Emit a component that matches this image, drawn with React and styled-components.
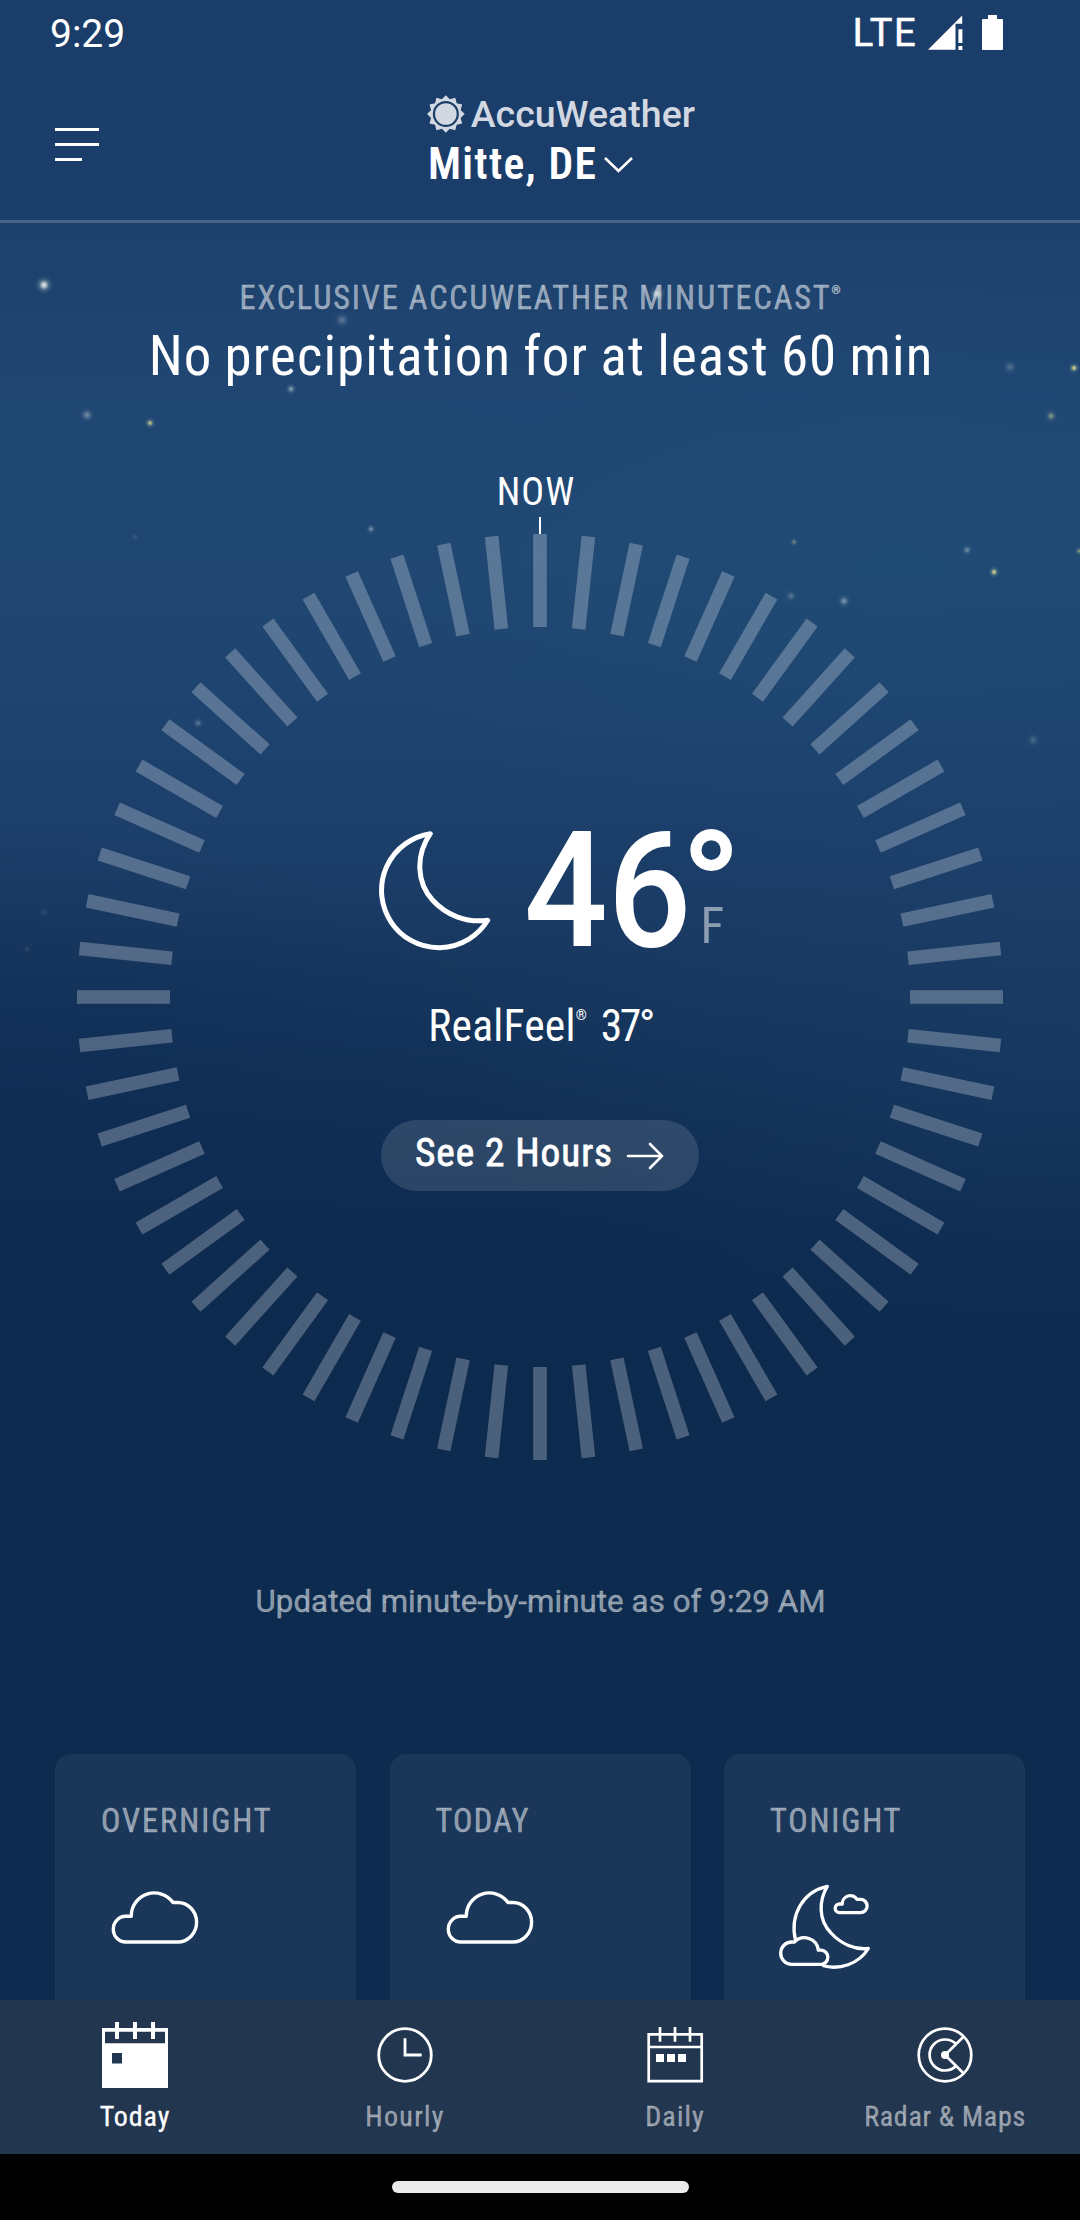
import React from 'react';
import styled, { createGlobalStyle } from 'styled-components';

const GlobalStyle = createGlobalStyle`
  * { box-sizing: border-box; }
  body {
    margin: 0;
    background: #000;
    color: #fff;
    font-family: Roboto, "Liberation Sans", sans-serif;
    font-stretch: 75%;
  }
`;

const Screen = styled.div`
  position: relative;
  display: flex;
  flex-direction: column;
  width: 1080px;
  height: 2220px;
  overflow: hidden;
  background:
    radial-gradient(ellipse 520px 260px at 0 1090px, rgba(13, 42, 82, 0.45), transparent),
    radial-gradient(ellipse 620px 300px at 1080px 1060px, rgba(40, 84, 128, 0.22), transparent),
    radial-gradient(ellipse 560px 300px at 900px 560px, rgba(30, 84, 122, 0.3), transparent),
    linear-gradient(
      180deg,
      #1b3d69 0, #1b3d69 223px, #1d416c 224px, #204673 400px, #204772 560px,
      #1e436f 720px, #1b3e69 860px, #183860 950px, #13335a 1040px,
      #102e54 1130px, #0d2a4f 1240px, #0d2b4e 1400px, #0d2b4e 100%
    );
`;

const Stars = styled.svg`
  position: absolute;
  top: 223px;
  left: 0;
  pointer-events: none;
`;

const StatusBar = styled.div`
  display: flex;
  justify-content: space-between;
  align-items: flex-start;
  height: 69px;
  padding: 0 77px 0 50px;
  font-stretch: 100%;
`;

const Clock = styled.span`
  font-size: 39px;
  line-height: 69px;
`;

const StatusIcons = styled.div`
  display: flex;
  align-items: center;
  height: 65px;
`;

const Network = styled.span`
  margin-right: 11px;
  font-size: 38px;
  line-height: 66px;
  letter-spacing: 1.5px;
  -webkit-text-stroke: 0.6px #fff;
`;

const SignalIcon = styled.svg`
  margin-right: 19px;
`;

const Header = styled.header`
  display: grid;
  grid-template-columns: 1fr 268px 1fr;
  align-items: start;
  height: 154px;
  padding: 26px 13px 0 55px;
  border-bottom: 3px solid #4a6486;
`;

const MenuButton = styled.button`
  display: flex;
  flex-direction: column;
  gap: 12px;
  width: 44px;
  margin: 33px 0 0;
  padding: 0;
  border: 0;
  background: none;
`;

const MenuLine = styled.span`
  width: ${(p) => (p.$short ? '27px' : '44px')};
  height: 3px;
  background: #fff;
`;

const Brand = styled.div`
  display: flex;
  flex-direction: column;
  gap: 10px;
`;

const Logo = styled.div`
  display: flex;
  gap: 6px;
  height: 38px;
  color: #d2d8e1;
`;

const LogoText = styled.span`
  font-size: 37.5px;
  font-weight: 500;
  font-stretch: 100%;
  line-height: 38px;
`;

const Place = styled.div`
  display: flex;
  align-items: center;
  gap: 7px;
  padding-left: 1px;
  font-size: 43.6px;
  font-weight: 600;
  line-height: 44px;
  letter-spacing: 1.3px;
  white-space: nowrap;
`;

const Hero = styled.main`
  display: flex;
  flex-direction: column;
  align-items: center;
  padding-top: 55px;
  white-space: nowrap;
`;

const Eyebrow = styled.div`
  display: flex;
  font-size: 32.3px;
  line-height: 40px;
  letter-spacing: 1.85px;
  color: rgba(255, 255, 255, 0.5);
  -webkit-text-stroke: 0.4px rgba(255, 255, 255, 0.5);
`;

const Registered = styled.span`
  font-size: ${(p) => p.$size}px;
  font-stretch: 100%;
  line-height: ${(p) => p.$line}px;
  letter-spacing: 0;
`;

const Headline = styled.h1`
  margin: 4px 0 0 2px;
  font-size: 54.9px;
  font-weight: 400;
  line-height: 69px;
  letter-spacing: 1.1px;
  word-spacing: -1.5px;
`;

const Now = styled.div`
  margin: 81px 8px 0 0;
  font-size: 38px;
  line-height: 40px;
  letter-spacing: 1px;
`;

const Needle = styled.div`
  width: 2px;
  height: 17px;
  margin-top: 5px;
  background: #fff;
`;

const Dial = styled.section`
  display: grid;
  width: 926px;
  height: 926px;
`;

const DialRing = styled.svg`
  grid-area: 1 / 1;
`;

const DialBody = styled.div`
  grid-area: 1 / 1;
  display: flex;
  flex-direction: column;
  align-items: center;
  padding-top: 297px;
`;

const Conditions = styled.div`
  display: flex;
  margin-left: 31px;
`;

const Temperature = styled.span`
  width: 166px;
  margin-left: 33px;
  font-size: 161.7px;
  font-weight: 500;
  font-stretch: 100%;
  line-height: 120px;
  transform: scaleX(0.91);
  transform-origin: left;
`;

const Unit = styled.div`
  display: grid;
  width: 43px;
`;

const Degree = styled.span`
  grid-area: 1 / 1;
  align-self: start;
  margin-left: -9px;
  font-size: 158px;
  font-weight: 700;
  font-stretch: 100%;
  line-height: 116px;
`;

const Scale = styled.span`
  grid-area: 1 / 1;
  align-self: end;
  margin-left: 11px;
  font-size: 49.2px;
  line-height: 50px;
  color: rgba(255, 255, 255, 0.5);
`;

const RealFeel = styled.div`
  display: flex;
  margin: 53px 0 0 1px;
  font-size: 43.6px;
  line-height: 45px;
  letter-spacing: 0.2px;
`;

const RealFeelValue = styled.span`
  margin-left: 14px;
  letter-spacing: -2.4px;
`;

const HoursButton = styled.button`
  display: flex;
  justify-content: space-between;
  align-items: flex-start;
  width: 318px;
  height: 71px;
  margin-top: 71px;
  padding: 0 35px 0 34px;
  border: 0;
  border-radius: 36px;
  background: rgba(255, 255, 255, 0.12);
  color: #fff;
  font: inherit;
  font-size: 39.4px;
  line-height: 66px;
  letter-spacing: 0.9px;
  -webkit-text-stroke: 0.8px #fff;
`;

const ArrowIcon = styled.svg`
  margin-top: 21px;
`;

const Updated = styled.p`
  margin: 121px 0 0 1px;
  font-size: 31.2px;
  font-stretch: 100%;
  line-height: 41px;
  letter-spacing: 0.1px;
  color: rgba(255, 255, 255, 0.5);
  -webkit-text-stroke: 0.4px rgba(255, 255, 255, 0.5);
`;

const Cards = styled.section`
  display: grid;
  grid-template-columns: repeat(3, 301px);
  justify-content: space-between;
  flex: 1;
  margin-top: 132px;
  padding: 0 55px;
`;

const Card = styled.article`
  padding: 47px 0 0 46px;
  border-radius: 16px 16px 0 0;
  background: #1a3659;
`;

const CardTitle = styled.h2`
  margin: 0 0 29px;
  font-size: 32.3px;
  font-weight: 400;
  line-height: 40px;
  letter-spacing: ${(p) => p.$spacing}px;
  color: rgba(255, 255, 255, 0.5);
  -webkit-text-stroke: 0.4px rgba(255, 255, 255, 0.5);
`;

const TabBar = styled.nav`
  display: grid;
  grid-template-columns: repeat(4, 1fr);
  height: 154px;
  background: #23364f;
`;

const Tab = styled.div`
  display: flex;
  flex-direction: column;
  align-items: center;
  gap: 10.5px;
  padding-top: 22px;
`;

const TabLabel = styled.span`
  font-size: 28px;
  line-height: 36px;
  letter-spacing: ${(p) => p.$spacing}px;
  white-space: nowrap;
  color: ${(p) => (p.$active ? '#fff' : 'rgba(255, 255, 255, 0.5)')};
  -webkit-text-stroke: 0.3px currentColor;
`;

const GestureBar = styled.footer`
  display: flex;
  justify-content: center;
  align-items: center;
  height: 66px;
  background: #000;
`;

const GestureHandle = styled.span`
  width: 297px;
  height: 12px;
  border-radius: 6px;
  background: #ebebeb;
`;

const STARS = [
  [44, 62, 9, 'w', 0.95], [657, 71, 9, 'w', 0.7], [342, 97, 9, 'w', 0.3],
  [291, 166, 6, 'w', 0.5], [87, 192, 8, 'w', 0.4], [150, 200, 6, 'y', 0.8],
  [1010, 144, 8, 'w', 0.25], [1074, 145, 6, 'y', 0.9], [1051, 193, 7, 'y', 0.5],
  [135, 314, 5, 'w', 0.12], [371, 306, 5, 'w', 0.45], [794, 319, 5, 'y', 0.4],
  [967, 327, 6, 'w', 0.4], [994, 349, 6, 'y', 0.9], [1079, 328, 5, 'y', 0.5],
  [791, 373, 7, 'w', 0.25], [844, 378, 7, 'w', 0.45], [198, 500, 6, 'w', 0.3],
  [1033, 517, 8, 'w', 0.2], [44, 689, 6, 'w', 0.1], [27, 726, 5, 'w', 0.1],
];

function NightSky() {
  return (
    <Stars width="1080" height="900">
      <defs>
        <radialGradient id="w">
          <stop offset="0" stopColor="#fff" />
          <stop offset="0.3" stopColor="#e6eee8" stopOpacity="0.65" />
          <stop offset="0.6" stopColor="#b8cfd0" stopOpacity="0.2" />
          <stop offset="1" stopColor="#b8cfd0" stopOpacity="0" />
        </radialGradient>
        <radialGradient id="y">
          <stop offset="0" stopColor="#fff3a0" />
          <stop offset="0.3" stopColor="#d9d68a" stopOpacity="0.65" />
          <stop offset="0.6" stopColor="#8fb0a0" stopOpacity="0.2" />
          <stop offset="1" stopColor="#8fb0a0" stopOpacity="0" />
        </radialGradient>
      </defs>
      {STARS.map(([x, y, r, tint, opacity]) => (
        <circle key={`${x}-${y}`} cx={x} cy={y} r={r} fill={`url(#${tint})`} opacity={opacity} />
      ))}
    </Stars>
  );
}

const SUN_RAYS = Array.from({ length: 24 }, (_, i) => {
  const angle = (i * Math.PI) / 12 - Math.PI / 2;
  const r = i % 2 ? 15.4 : 19;
  return `${(19 + r * Math.cos(angle)).toFixed(2)},${(19 + r * Math.sin(angle)).toFixed(2)}`;
}).join(' ');

function SunLogo() {
  return (
    <svg width="38" height="38" viewBox="0 0 38 38">
      <polygon points={SUN_RAYS} fill="#d2d8e1" />
      <circle cx="19" cy="19" r="12" fill="#d2d8e1" stroke="#1b3d69" strokeWidth="2.2" />
    </svg>
  );
}

function CloudIcon() {
  return (
    <svg width="110" height="110" fill="none" stroke="#fff" strokeWidth="3.4" strokeLinejoin="round">
      <path d="M24.7 72A12.4 12.85 0 0 1 24.7 46.3H30.3A23 23 0 0 1 72 32.5H76.7A18.9 19.75 0 0 1 76.7 72Z" />
    </svg>
  );
}

function CloudyMoonIcon() {
  return (
    <svg width="110" height="110" viewBox="-1 0 110 110" fill="none" stroke="#fff" strokeWidth="3.3" strokeLinejoin="round">
      <path d="M24.5 70C18.5 45 32 21.5 56.3 16.3C48 30 47 50 60 63C70 74 84 80 97.3 78.5C88 94 68 100.5 51.5 95.5" />
      <path d="M68.5 42.7A4.3 4.35 0 0 1 68.5 34H71.3A8 8 0 0 1 86 29.3H89.5A6.6 6.7 0 0 1 89.5 42.7Z" />
      <path d="M20.7 94.3A11 11.15 0 0 1 20.7 72H23.3A14 14 0 0 1 47.3 80.2H50A6.8 7 0 0 1 50 94.3Z" />
    </svg>
  );
}

function TodayIcon() {
  return (
    <svg width="66" height="66">
      <path
        fill="#fff"
        fillRule="evenodd"
        d="M0 6H66V66H0ZM3 9.7V21.3H63V9.7ZM10 31V41.4H20V31Z"
      />
      <path d="M15 0V17M33 0V17M51 0V17" stroke="#fff" strokeWidth="4" />
    </svg>
  );
}

function HourlyIcon() {
  return (
    <svg width="66" height="66" fill="none" stroke="#fff" strokeWidth="2.8">
      <circle cx="33" cy="33" r="26.3" />
      <path d="M33 16.3V33H49.7" />
    </svg>
  );
}

function DailyIcon() {
  return (
    <svg width="66" height="66" fill="none" stroke="#fff" strokeWidth="2.7">
      <path d="M6.7 12.3H59.7V59.2H6.7ZM6.7 25H59.7M18 5V19.7M33 5V19.7M48 5V19.7" />
      <path d="M14 32h8v8h-8zM25 32h8v8h-8zM36 32h8v8h-8z" fill="#fff" stroke="none" />
    </svg>
  );
}

function RadarIcon() {
  return (
    <svg width="66" height="66" fill="none" stroke="#fff" strokeWidth="2.7">
      <circle cx="33" cy="33" r="26.3" />
      <path d="M44 22A15.5 15.5 0 1 0 44 44" />
      <path d="M52 14.3L33 33L52 51.7" />
      <circle cx="33" cy="33" r="4" fill="#fff" stroke="none" />
    </svg>
  );
}

const CARDS = [
  { title: 'OVERNIGHT', spacing: 1.95, Icon: CloudIcon },
  { title: 'TODAY', spacing: 1.25, Icon: CloudIcon },
  { title: 'TONIGHT', spacing: 1.85, Icon: CloudyMoonIcon },
];

const TABS = [
  { label: 'Today', spacing: 0.92, Icon: TodayIcon },
  { label: 'Hourly', spacing: 1.3, Icon: HourlyIcon },
  { label: 'Daily', spacing: 1.1, Icon: DailyIcon },
  { label: 'Radar & Maps', spacing: 0.7, Icon: RadarIcon },
];

const MINUTES = Array.from({ length: 60 }, (_, i) => i * 6);

export default function App() {
  return (
    <Screen>
      <GlobalStyle />
      <NightSky />

      <StatusBar>
        <Clock>9:29</Clock>
        <StatusIcons>
          <Network>LTE</Network>
          <SignalIcon width="35" height="35" fill="#fff">
            <path d="M34.2 0.5V8.7H27.5V34.7H0ZM30.4 14.2h4V28h-4zM30.4 31h4v4h-4z" />
          </SignalIcon>
          <svg width="21" height="35" fill="#fff">
            <path d="M6 0H15V4H20Q21 4 21 5V34Q21 35 20 35H1Q0 35 0 34V5Q0 4 1 4H6Z" />
          </svg>
        </StatusIcons>
      </StatusBar>

      <Header>
        <MenuButton aria-label="Menu">
          <MenuLine />
          <MenuLine />
          <MenuLine $short />
        </MenuButton>
        <Brand>
          <Logo>
            <SunLogo />
            <LogoText>AccuWeather</LogoText>
          </Logo>
          <Place>
            Mitte, DE
            <svg width="29" height="16" fill="none" stroke="#fff" strokeWidth="2.6">
              <path d="M1 1L14.5 14L28 1" />
            </svg>
          </Place>
        </Brand>
      </Header>

      <Hero>
        <Eyebrow>
          EXCLUSIVE ACCUWEATHER MINUTECAST
          <Registered $size={11.5} $line={24}>®</Registered>
        </Eyebrow>
        <Headline>No precipitation for at least 60 min</Headline>
        <Now>NOW</Now>
        <Needle />
        <Dial>
          <DialRing width="926" height="926" fill="#fff" fillOpacity="0.26">
            {MINUTES.map((angle) => (
              <rect
                key={angle}
                x="456.2"
                y="0"
                width="13.6"
                height="93"
                transform={`rotate(${angle} 463 463)`}
              />
            ))}
          </DialRing>
          <DialBody>
            <Conditions>
              <svg width="112" height="120" fill="none" stroke="#fff" strokeWidth="5" strokeLinejoin="round">
                <path d="M51.3 2.7A57.3 57.3 0 1 0 108.7 89.3C87 92 67 84 53.5 69C38 52 36 25 51.3 2.7Z" />
              </svg>
              <Temperature>46</Temperature>
              <Unit>
                <Degree>°</Degree>
                <Scale>F</Scale>
              </Unit>
            </Conditions>
            <RealFeel>
              RealFeel
              <Registered $size={14} $line={22}>®</Registered>
              <RealFeelValue>37°</RealFeelValue>
            </RealFeel>
            <HoursButton>
              See 2 Hours
              <ArrowIcon width="38" height="30" fill="none" stroke="#fff" strokeWidth="2.6" strokeLinecap="round">
                <path d="M2 15H36M24 3L36 15L24 27" />
              </ArrowIcon>
            </HoursButton>
          </DialBody>
        </Dial>
        <Updated>Updated minute-by-minute as of 9:29 AM</Updated>
      </Hero>

      <Cards>
        {CARDS.map(({ title, spacing, Icon }) => (
          <Card key={title}>
            <CardTitle $spacing={spacing}>{title}</CardTitle>
            <Icon />
          </Card>
        ))}
      </Cards>

      <TabBar>
        {TABS.map(({ label, spacing, Icon }, i) => (
          <Tab key={label}>
            <Icon />
            <TabLabel $spacing={spacing} $active={i === 0}>{label}</TabLabel>
          </Tab>
        ))}
      </TabBar>

      <GestureBar>
        <GestureHandle />
      </GestureBar>
    </Screen>
  );
}
